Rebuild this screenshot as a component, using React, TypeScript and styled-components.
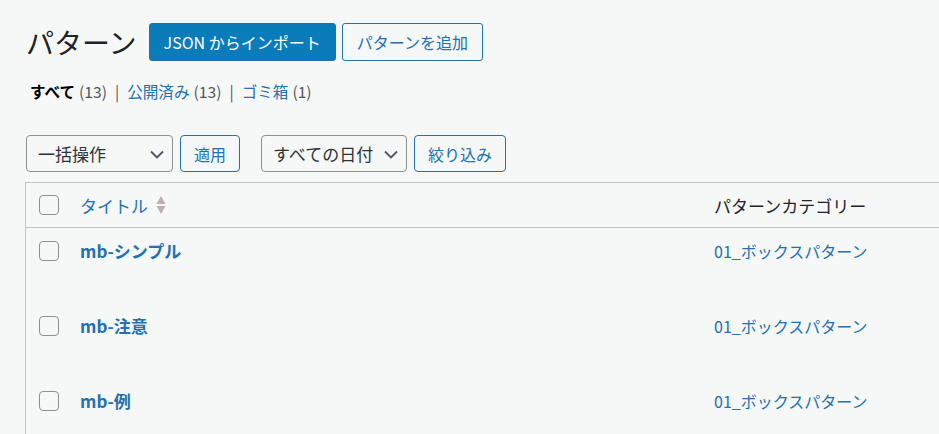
import styled, { createGlobalStyle } from "styled-components";

const GlobalStyle = createGlobalStyle`
  html, body {
    margin: 0;
    padding: 0;
    background: #f6f7f7;
  }
  body {
    font-family: "Noto Sans CJK JP", "Noto Sans", sans-serif;
    color: #1d2327;
    overflow: hidden;
  }
`;

// ─── Shell ────────────────────────────────────────────────────
const Wrap = styled.div`
  width: 939px;
  height: 434px;
  padding: 23px 0 0 25px;
  box-sizing: border-box;
  overflow: hidden;
`;

const HeadRow = styled.div`
  display: flex;
  align-items: center;
  gap: 6px;
  padding-left: 1px;
`;

const Heading = styled.h1`
  margin: 0 6px 0 0;
  font-size: 28px;
  font-weight: 400;
  line-height: 38px;
  color: #1d2327;
`;

const Button = styled.button<{ $primary?: boolean }>`
  height: 38px;
  padding: 0 14px;
  box-sizing: border-box;
  border-radius: 3px;
  border: 1px solid #2271b1;
  background: ${({ $primary }) => ($primary ? "#0b7cba" : "#f6f7f7")};
  color: ${({ $primary }) => ($primary ? "#fff" : "#2271b1")};
  font-family: inherit;
  font-size: 16px;
  line-height: 1;
  cursor: pointer;
`;

// ─── Status links ─────────────────────────────────────────────
const Subsub = styled.ul`
  display: flex;
  align-items: center;
  list-style: none;
  margin: 19px 0 0 5px;
  padding: 0;
  font-size: 15.6px;
  line-height: 22px;
  color: #646970;
`;

const SubItem = styled.li`
  display: flex;
  align-items: center;
`;

const SubLink = styled.a<{ $current?: boolean }>`
  color: ${({ $current }) => ($current ? "#000" : "#2271b1")};
  font-weight: ${({ $current }) => ($current ? 700 : 400)};
  text-decoration: none;
`;

const Count = styled.span`
  color: #50575e;
  margin-left: 4px;
`;

const Sep = styled.span`
  color: #50575e;
  margin: 0 8px;
`;

// ─── Tablenav ─────────────────────────────────────────────────
const Tablenav = styled.div`
  display: flex;
  align-items: center;
  margin: 33px 0 0 1px;
  height: 37px;
`;

const Select = styled.div<{ $w: string; $ml?: string }>`
  display: flex;
  align-items: center;
  justify-content: space-between;
  width: ${({ $w }) => $w};
  height: 37px;
  box-sizing: border-box;
  margin-left: ${({ $ml }) => $ml ?? "0"};
  padding: 0 7px 0 11px;
  border: 1px solid #8c8f94;
  border-radius: 4px;
  background: #f6f7f7;
  font-size: 17px;
  color: #2c3338;
`;

const SmallButton = styled(Button)`
  height: 37px;
  padding: 0 13px;
  margin-left: 7px;
  font-size: 16px;
  border-radius: 4px;
`;

const Chevron = () => (
  <svg width="16" height="16" viewBox="0 0 16 16" fill="none">
    <path d="M2 5.5l6 6 6-6" stroke="#50575e" strokeWidth="1.9" />
  </svg>
);

// ─── Table ────────────────────────────────────────────────────
const Table = styled.div`
  margin-top: 10px;
  border-top: 1px solid #c3c4c7;
  border-left: 1px solid #c3c4c7;
`;

const HeadLine = styled.div`
  display: grid;
  grid-template-columns: 54px 634px 1fr;
  align-items: center;
  height: 44px;
  border-bottom: 1px solid #c3c4c7;
`;

const Row = styled.div`
  display: grid;
  grid-template-columns: 54px 634px 1fr;
  align-items: start;
  height: 75px;
  padding-top: 13px;
  box-sizing: border-box;
`;

const Check = styled.span`
  display: block;
  width: 20px;
  height: 20px;
  box-sizing: border-box;
  margin-left: 13px;
  border: 1px solid #8c8f94;
  border-radius: 4px;
  background: #f6f7f7;
`;

const ColTitle = styled.a`
  display: flex;
  align-items: center;
  gap: 8px;
  color: #2271b1;
  font-size: 17px;
  text-decoration: none;
`;

const ColPlain = styled.span`
  color: #1d2327;
  font-size: 17px;
`;

const RowTitle = styled.a`
  color: #2271b1;
  font-size: 17px;
  font-weight: 700;
  line-height: 20px;
  text-decoration: none;
`;

const Cat = styled.a`
  color: #2271b1;
  font-size: 16px;
  line-height: 20px;
  text-decoration: none;
`;

const SortArrows = () => (
  <svg width="10" height="20" viewBox="0 0 10 20">
    <path d="M5 1l4.5 8h-9z" fill="#bcb0b4" />
    <path d="M5 19l4.5-8h-9z" fill="#bcb0b4" />
  </svg>
);

const ROWS = ["mb-シンプル", "mb-注意", "mb-例"];

export default function App() {
  return (
    <>
      <GlobalStyle />
      <Wrap>
        <HeadRow>
          <Heading>パターン</Heading>
          <Button $primary>JSON からインポート</Button>
          <Button>パターンを追加</Button>
        </HeadRow>

        <Subsub>
          <SubItem>
            <SubLink $current>すべて</SubLink>
            <Count>(13)</Count>
            <Sep>|</Sep>
          </SubItem>
          <SubItem>
            <SubLink>公開済み</SubLink>
            <Count>(13)</Count>
            <Sep>|</Sep>
          </SubItem>
          <SubItem>
            <SubLink>ゴミ箱</SubLink>
            <Count>(1)</Count>
          </SubItem>
        </Subsub>

        <Tablenav>
          <Select $w="147px">
            一括操作
            <Chevron />
          </Select>
          <SmallButton>適用</SmallButton>
          <Select $w="146px" $ml="21px">
            すべての日付
            <Chevron />
          </Select>
          <SmallButton>絞り込み</SmallButton>
        </Tablenav>

        <Table>
          <HeadLine>
            <Check />
            <ColTitle>
              タイトル
              <SortArrows />
            </ColTitle>
            <ColPlain>パターンカテゴリー</ColPlain>
          </HeadLine>
          {ROWS.map((t) => (
            <Row key={t}>
              <Check />
              <RowTitle>{t}</RowTitle>
              <Cat>01_ボックスパターン</Cat>
            </Row>
          ))}
        </Table>
      </Wrap>
    </>
  );
}
